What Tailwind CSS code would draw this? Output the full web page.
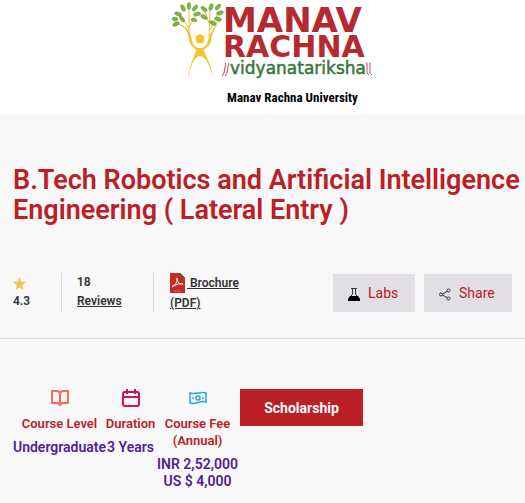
<!DOCTYPE html>
<html lang="en">
<head>
  <meta charset="UTF-8" />
  <meta name="viewport" content="width=device-width, initial-scale=1" />
  <title>B.Tech Robotics and Artificial Intelligence Engineering</title>
  <script src="https://cdn.jsdelivr.net/npm/@tailwindcss/browser@4"></script>
</head>
<body class="bg-[#f8f8f8] font-['Roboto',sans-serif] text-[#333]">
  <header class="bg-white flex flex-col items-center pb-2">
    <svg class="ml-5 w-[204px] h-[89px]" viewBox="0 0 204 89" role="img" aria-label="Manav Rachna Vidyanatariksha">
      <!-- tree figure -->
      <g fill="#f3c62f">
        <circle cx="29" cy="39" r="4.500" />
        <path d="M10 25C15 28 18 35 18 40C19 46 23 47 25 50C26 52 18 63 17 80C19 67 23 56 29 56C35 56 40 67 42 80C41 64 33 53 33 50C35 47 39 46 40 41C41 34 43 28 48 24C43 26 39 33 37 40C36 46 33 48 29 48C25 48 22 46 21 40C19 31 16 27 10 25Z" />
      </g>
      <g fill="none" stroke="#e0bd32" stroke-width="1">
        <path d="M18 37V10M18 29L9 14M18 27L27 12M13 27L3 21M38 37L39 11M39 30L48 11M40 27L50 20M39 26L33 9" />
      </g>
      <g fill="#7fb83c" stroke="#4e962f" stroke-width="0.500">
        <ellipse cx="7" cy="14" rx="3.500" ry="1.800" transform="rotate(20 7 14)" />
        <ellipse cx="4" cy="19" rx="3" ry="1.700" transform="rotate(5 4 19)" />
        <ellipse cx="5" cy="24" rx="3.500" ry="1.800" transform="rotate(-25 5 24)" />
        <ellipse cx="11" cy="19" rx="3.500" ry="1.700" transform="rotate(55 11 19)" />
        <ellipse cx="12" cy="8" rx="3.500" ry="1.800" transform="rotate(60 12 8)" />
        <ellipse cx="18" cy="6" rx="3.500" ry="1.800" transform="rotate(90 18 6)" />
        <ellipse cx="24" cy="8" rx="3.500" ry="1.800" transform="rotate(-50 24 8)" />
        <ellipse cx="26" cy="14" rx="3.500" ry="1.800" transform="rotate(-10 26 14)" />
        <ellipse cx="23" cy="20" rx="3" ry="1.700" transform="rotate(20 23 20)" />
        <ellipse cx="33" cy="9" rx="3.500" ry="1.800" transform="rotate(35 33 9)" />
        <ellipse cx="40" cy="7" rx="3.500" ry="1.800" transform="rotate(-70 40 7)" />
        <ellipse cx="47" cy="7" rx="3.500" ry="1.800" transform="rotate(-50 47 7)" />
        <ellipse cx="49" cy="13" rx="3.500" ry="1.800" transform="rotate(-20 49 13)" />
        <ellipse cx="47" cy="19" rx="3.500" ry="1.800" transform="rotate(15 47 19)" />
        <ellipse cx="33" cy="17" rx="3.500" ry="1.800" transform="rotate(30 33 17)" />
        <ellipse cx="42" cy="23" rx="3.500" ry="1.800" transform="rotate(30 42 23)" />
      </g>
      <g class="font-['DejaVu_Sans',sans-serif]">
        <text x="52" y="32" class="text-[34px] font-bold" fill="#b52a2f">MANAV</text>
        <text x="52" y="57" class="text-[30px] font-bold" fill="#b52a2f">RACHNA</text>
        <text x="59" y="74" class="text-[17px]" fill="#35783c" stroke="#35783c" stroke-width="0.500">vidyanatariksha</text>
      </g>
      <g fill="none" stroke="#c94b50" stroke-width="1">
        <path d="M54 63C55 63 55 64 54 67L53 73L51 76M57 63C58 63 58 64 57 67L56 73L54 76M195 63H196V73L198 75M198 63H199V73L201 75" />
      </g>
    </svg>
    <p class="ml-[60px] text-[13px] leading-[18px] font-bold font-['Roboto_Condensed','Roboto',sans-serif] text-black">Manav Rachna University</p>
  </header>

  <main>
    <section class="border-b border-[#dcdcdc] pt-[50px] pb-[25px] pl-[13px]">
      <h1 class="text-[27px] leading-[30px] font-semibold text-[#bb2026]">B.Tech Robotics and Artificial Intelligence Engineering ( Lateral Entry )</h1>

      <div class="mt-12 flex justify-between pr-[13px] text-xs font-semibold">
        <div class="flex">
          <div class="w-[49px] h-10 border-r border-[#dcdcdc] pt-1">
            <svg class="size-[13px]" viewBox="0 0 14 14" fill="#f4bf4f"><path d="M7 0L9 5L14 5L10 9L11 14L7 11L3 14L4 9L0 5L5 5Z" /></svg>
            <p class="mt-px leading-5">4.3</p>
          </div>
          <div class="w-[92px] h-10 border-r border-[#dcdcdc] pl-[15px] leading-[19px]">
            <p>18</p>
            <a href="#reviews" class="underline">Reviews</a>
          </div>
          <a href="#brochure" class="w-[100px] pl-4 leading-5 underline">
            <svg class="inline-block align-top w-[15px] h-5 mr-[2px]" viewBox="0 0 15 20">
              <path d="M0 0H10L15 5V20H0Z" fill="#c92d22" />
              <path d="M10 0L15 5H10Z" fill="#565656" />
              <path d="M2 13C6 12 8 8 7 5C6 7 9 12 13 11C9 10 5 12 2 14" fill="none" stroke="#fff" />
              <path d="M5 18H10" stroke="#e9a19b" stroke-width="1" stroke-dasharray="1 1" />
            </svg>
            Brochure (PDF)
          </a>
        </div>
        <div class="flex gap-[9px] pt-px text-sm font-normal text-[#bb2026]">
          <button type="button" class="flex items-center gap-2 h-[38px] w-[82px] pl-[15px] bg-[#e1dfe4]">
            <svg class="w-3 h-[13px] mt-[3px]" viewBox="0 0 12 13"><path d="M3 .5H9M4.500 1V6L1 11M7.500 1V6L11 11" fill="none" stroke="#333" /><path d="M2 8H10L12 11V13H0V11Z" fill="#000" /></svg>
            Labs
          </button>
          <button type="button" class="flex items-center gap-2 h-[38px] w-[88px] pl-[15px] bg-[#e1dfe4]">
            <svg class="w-3 h-[13px] mt-[3px]" viewBox="0 0 12 13" fill="none" stroke="#333"><circle cx="2" cy="6.500" r="1.500" /><circle cx="9.500" cy="2.500" r="1.500" /><circle cx="9.500" cy="10.500" r="1.500" /><path d="M3.500 6L8 3.500M3.500 7L8 9.500" /></svg>
            Share
          </button>
        </div>
      </div>
    </section>

    <section class="flex items-start pl-[13px] pt-[50px] pb-3">
      <ul class="flex text-center text-[13px] leading-[17px] font-semibold text-[#bb2026]">
        <li class="w-[93px] flex flex-col items-center">
          <svg class="size-[18px]" viewBox="0 0 18 18" fill="none" stroke="#fb695f" stroke-width="2"><path d="M1 2H7L9 4L11 2H17V14H11L9 16L7 14H1ZM9 4V16" /></svg>
          <p class="mt-2">Course Level</p>
          <p class="mt-[7px] text-sm leading-[17px] text-[#4d2396]">Undergraduate</p>
        </li>
        <li class="w-[49px] flex flex-col items-center whitespace-nowrap">
          <svg class="size-[18px]" viewBox="0 0 18 18" fill="none" stroke="#ce1452" stroke-width="2"><rect x="1" y="3" width="16" height="14" rx="2" /><path d="M1 8H17M5 0V5M13 0V5" /></svg>
          <p class="mt-2">Duration</p>
          <p class="mt-[7px] text-sm leading-[17px] text-[#4d2396]">3 Years</p>
        </li>
        <li class="w-[85px] flex flex-col items-center">
          <svg class="size-[18px]" viewBox="0 0 18 18" fill="none" stroke="#22a9e0" stroke-width="1.500"><path d="M1 4C6 6 12 2 17 4V13C12 11 6 16 1 14Z" /><circle cx="9" cy="9" r="2" /><path d="M4 8V10M14 8V10" /></svg>
          <p class="mt-2">Course Fee<br />(Annual)</p>
          <p class="mt-[7px] text-sm leading-[17px] text-[#4d2396]">INR 2,52,000<br />US $ 4,000</p>
        </li>
      </ul>
      <button type="button" class="w-[123px] h-[37px] bg-[#bb2026] text-sm font-bold text-white">Scholarship</button>
    </section>
  </main>
</body>
</html>
